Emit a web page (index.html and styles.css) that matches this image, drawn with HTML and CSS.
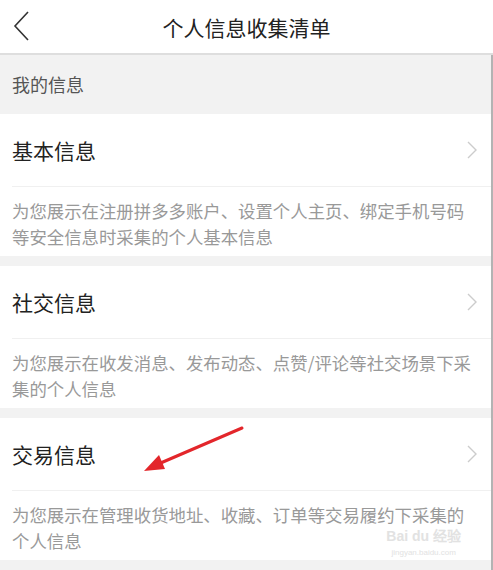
FILE: index.html
```html
<!DOCTYPE html>
<html lang="zh-CN">
<head>
    <meta charset="UTF-8">
    <meta name="viewport" content="width=device-width, initial-scale=1.0">
    <title>个人信息收集清单</title>
    <link rel="stylesheet" href="styles.css">
</head>
<body>

    <!-- Top bar -->
    <div class="top-bar">
        <svg class="back-icon" width="18" height="32" viewBox="0 0 18 32">
            <polyline points="15,2 2,16 15,30" fill="none" stroke="#333" stroke-width="1.6"/>
        </svg>
        <h1>个人信息收集清单</h1>
    </div>

    <div class="page">
        <div class="section-title">我的信息</div>

        <div class="card">
            <div class="card-head">
                <span>基本信息</span>
                <svg class="more-icon" width="10" height="18" viewBox="0 0 10 18">
                    <polyline points="1,1 9,9 1,17" fill="none" stroke="#ccc" stroke-width="1.4"/>
                </svg>
            </div>
            <p class="card-desc">为您展示在注册拼多多账户、设置个人主页、绑定手机号码等安全信息时采集的个人基本信息</p>
        </div>

        <div class="card">
            <div class="card-head">
                <span>社交信息</span>
                <svg class="more-icon" width="10" height="18" viewBox="0 0 10 18">
                    <polyline points="1,1 9,9 1,17" fill="none" stroke="#ccc" stroke-width="1.4"/>
                </svg>
            </div>
            <p class="card-desc">为您展示在收发消息、发布动态、点赞/评论等社交场景下采集的个人信息</p>
        </div>

        <div class="card">
            <div class="card-head">
                <span>交易信息</span>
                <svg class="more-icon" width="10" height="18" viewBox="0 0 10 18">
                    <polyline points="1,1 9,9 1,17" fill="none" stroke="#ccc" stroke-width="1.4"/>
                </svg>
            </div>
            <p class="card-desc">为您展示在管理收货地址、收藏、订单等交易履约下采集的个人信息<span class="watermark"><span class="wm-logo">Bai du 经验</span><span class="wm-url">jingyan.baidu.com</span></span></p>

            <!-- red pointer arrow drawn over the card -->
            <svg class="pointer" width="110" height="50" viewBox="0 0 110 50">
                <line x1="104" y1="3" x2="18" y2="40" stroke="#e3262b" stroke-width="3" stroke-linecap="round"/>
                <polygon points="6,46 21,30 27,44" fill="#e3262b"/>
            </svg>
        </div>
    </div>

</body>
</html>
```

FILE: styles.css
```css
/* Basic Styles */
body {
    margin: 0;
    padding: 0;
    background-color: #f2f2f2;
    font-family: 'Noto Sans CJK SC', 'Noto Sans', sans-serif;
    height: 570px;
    overflow: hidden;
}

.top-bar {
    position: relative;
    height: 53px;
    background-color: white;
    border-bottom: 2px solid #dedede;
    display: flex;
    align-items: center;
    justify-content: center;
}

.top-bar h1 {
    margin: 0;
    font-size: 21px;
    font-weight: normal;
    color: #222;
}

.back-icon {
    position: absolute;
    left: 13px;
    top: 10px;
}

.page {
    border-right: 2px solid #b3b3b3;
    min-height: 520px;
}

.section-title {
    height: 59px;
    line-height: 59px;
    padding-left: 12px;
    font-size: 18px;
    color: #555;
}

/* Cards */
.card {
    position: relative;
    background-color: white;
    margin-bottom: 10px;
}

.card-head {
    height: 72px;
    display: flex;
    align-items: center;
    justify-content: space-between;
    padding: 0 14px 0 12px;
    font-size: 21px;
    color: #222;
}

.card-desc {
    margin: 0 0 0 12px;
    padding: 11px 18px 7px 0;
    border-top: 1px solid #f0f0f0;
    font-size: 17.4px;
    line-height: 25.5px;
    color: #999;
}

.pointer {
    position: absolute;
    left: 138px;
    top: 7px;
}

/* faint watermark sitting beside the last line */
.watermark {
    float: right;
    margin: 0 12px 0 0;
    display: flex;
    flex-direction: column;
    align-items: center;
    gap: 4px;
    color: #e2e2e2;
}

.wm-logo {
    font-size: 14px;
    line-height: 16px;
    font-family: 'Liberation Sans', sans-serif;
    font-weight: bold;
}

.wm-url {
    font-size: 8px;
    line-height: 9px;
    font-family: 'Liberation Sans', sans-serif;
}
```
